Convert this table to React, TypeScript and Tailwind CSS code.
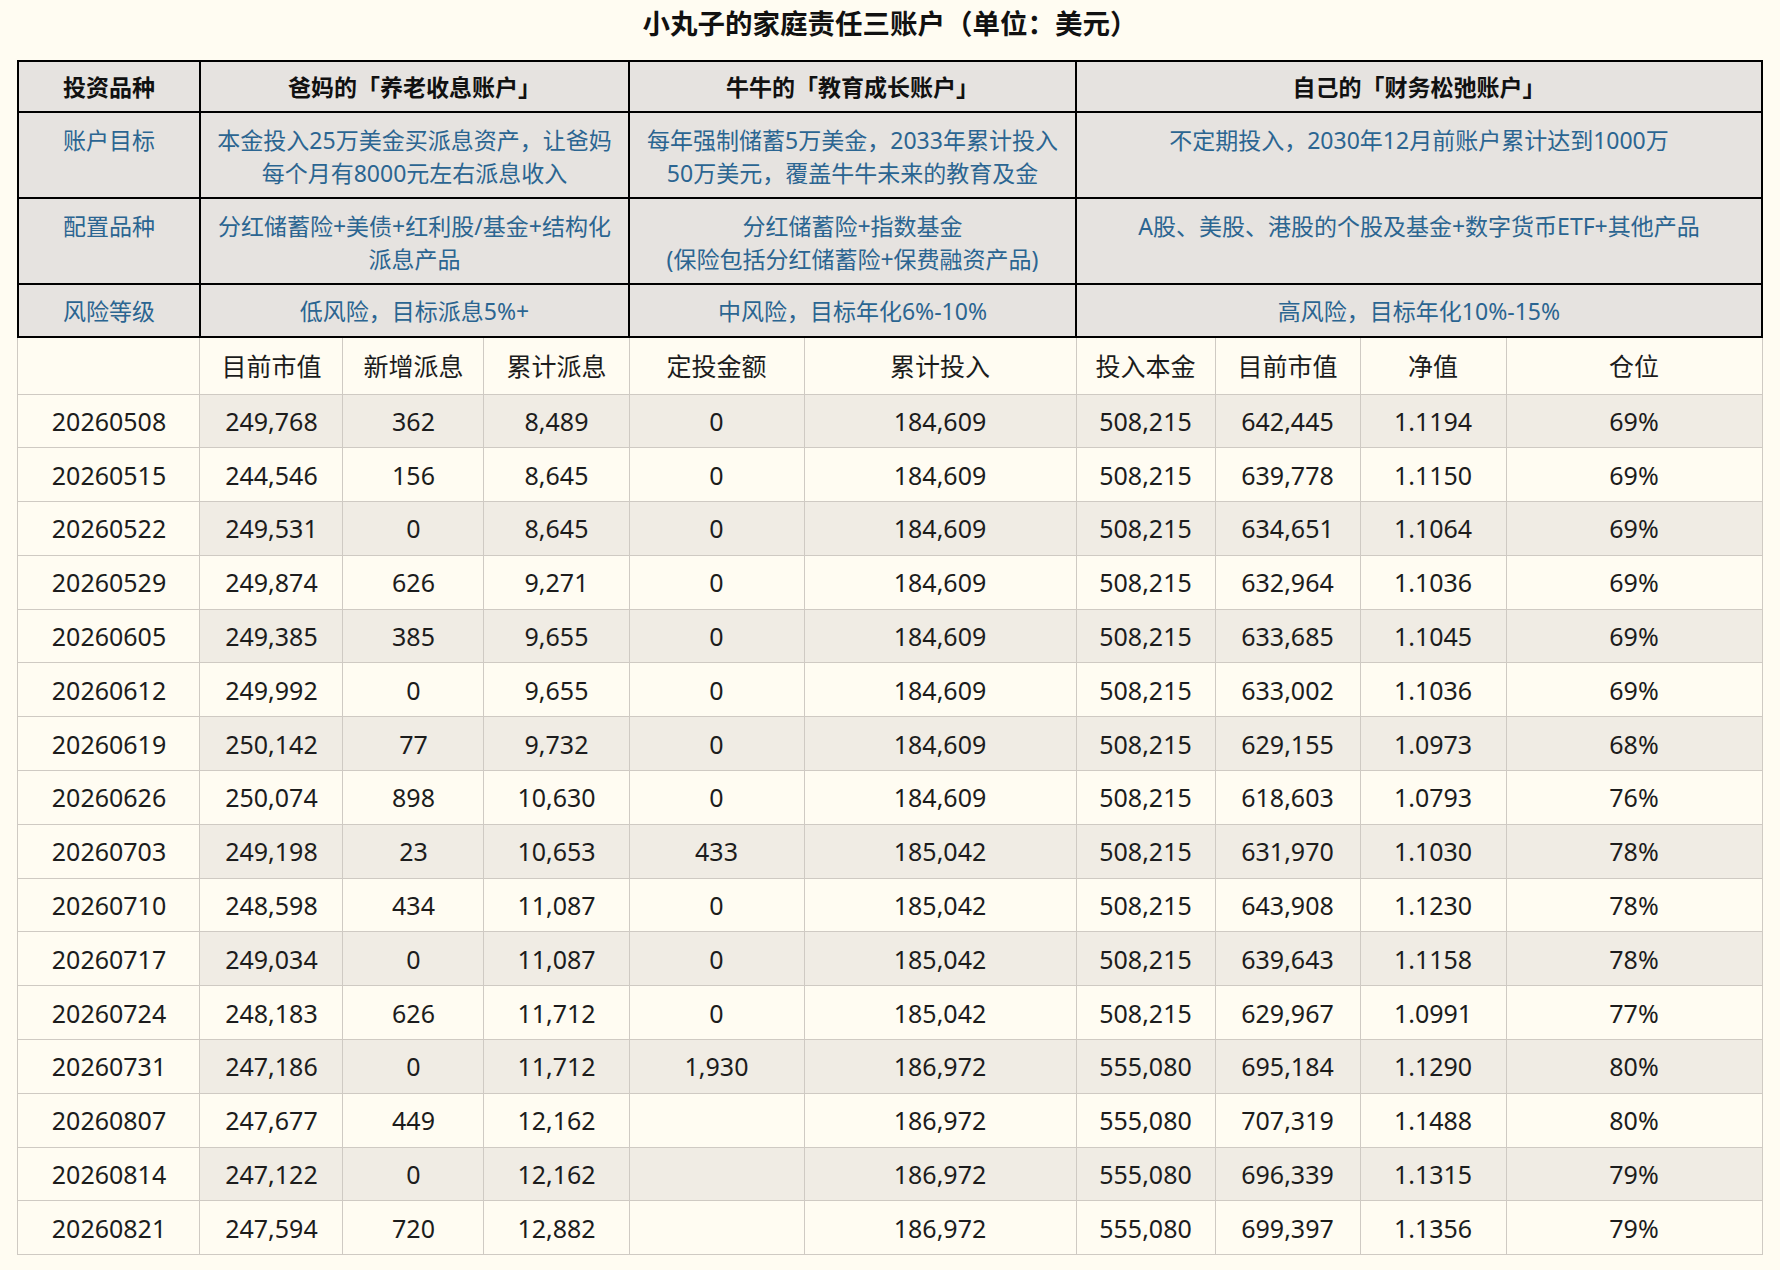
const rows: string[][] = [
  ["20260508", "249,768", "362", "8,489", "0", "184,609", "508,215", "642,445", "1.1194", "69%"],
  ["20260515", "244,546", "156", "8,645", "0", "184,609", "508,215", "639,778", "1.1150", "69%"],
  ["20260522", "249,531", "0", "8,645", "0", "184,609", "508,215", "634,651", "1.1064", "69%"],
  ["20260529", "249,874", "626", "9,271", "0", "184,609", "508,215", "632,964", "1.1036", "69%"],
  ["20260605", "249,385", "385", "9,655", "0", "184,609", "508,215", "633,685", "1.1045", "69%"],
  ["20260612", "249,992", "0", "9,655", "0", "184,609", "508,215", "633,002", "1.1036", "69%"],
  ["20260619", "250,142", "77", "9,732", "0", "184,609", "508,215", "629,155", "1.0973", "68%"],
  ["20260626", "250,074", "898", "10,630", "0", "184,609", "508,215", "618,603", "1.0793", "76%"],
  ["20260703", "249,198", "23", "10,653", "433", "185,042", "508,215", "631,970", "1.1030", "78%"],
  ["20260710", "248,598", "434", "11,087", "0", "185,042", "508,215", "643,908", "1.1230", "78%"],
  ["20260717", "249,034", "0", "11,087", "0", "185,042", "508,215", "639,643", "1.1158", "78%"],
  ["20260724", "248,183", "626", "11,712", "0", "185,042", "508,215", "629,967", "1.0991", "77%"],
  ["20260731", "247,186", "0", "11,712", "1,930", "186,972", "555,080", "695,184", "1.1290", "80%"],
  ["20260807", "247,677", "449", "12,162", "", "186,972", "555,080", "707,319", "1.1488", "80%"],
  ["20260814", "247,122", "0", "12,162", "", "186,972", "555,080", "696,339", "1.1315", "79%"],
  ["20260821", "247,594", "720", "12,882", "", "186,972", "555,080", "699,397", "1.1356", "79%"],
];

const columns = ["", "目前市值", "新增派息", "累计派息", "定投金额", "累计投入", "投入本金", "目前市值", "净值", "仓位"];

// header cells: thick black grid on grey
const head = "border-2 border-black bg-[#e6e3e0] px-2 text-center";
const label = head + " text-[#2b6591] align-top pt-[11px] leading-[33px]";
const cell = "border border-[#cfcac3] px-2 text-center text-[25px] leading-[32px]";

export default function App() {
  return (
    <div className="min-h-screen bg-[#fffcf2] pb-[15px] font-['Noto_Sans','Noto_Sans_CJK_SC',sans-serif] text-[#1c1c1c]">
      <h1 className="pt-[8px] pb-[20px] text-center text-[27.5px] font-bold leading-[32px] text-[#111]">
        小丸子的家庭责任三账户（单位：美元）
      </h1>

      <table className="mx-auto w-[1744px] table-fixed border-collapse">
        <colgroup>
          <col className="w-[182px]" />
          <col className="w-[143px]" />
          <col className="w-[141px]" />
          <col className="w-[145px]" />
          <col className="w-[175px]" />
          <col className="w-[272px]" />
          <col className="w-[139px]" />
          <col className="w-[145px]" />
          <col className="w-[146px]" />
          <col className="w-[256px]" />
        </colgroup>
        <tbody>
          <tr className="h-[51px] text-[23px] font-bold leading-[32px] text-[#111]">
            <td className={head}>投资品种</td>
            <td colSpan={3} className={head}>爸妈的「养老收息账户」</td>
            <td colSpan={2} className={head}>牛牛的「教育成长账户」</td>
            <td colSpan={4} className={head}>自己的「财务松弛账户」</td>
          </tr>
          <tr className="h-[86px] text-[23px]">
            <td className={label}>账户目标</td>
            <td colSpan={3} className={label}>
              本金投入25万美金买派息资产，让爸妈
              <br />
              每个月有8000元左右派息收入
            </td>
            <td colSpan={2} className={label}>
              每年强制储蓄5万美金，2033年累计投入
              <br />
              50万美元，覆盖牛牛未来的教育及金
            </td>
            <td colSpan={4} className={label}>不定期投入，2030年12月前账户累计达到1000万</td>
          </tr>
          <tr className="h-[86px] text-[23px]">
            <td className={label}>配置品种</td>
            <td colSpan={3} className={label}>
              分红储蓄险+美债+红利股/基金+结构化
              <br />
              派息产品
            </td>
            <td colSpan={2} className={label}>
              分红储蓄险+指数基金
              <br />
              (保险包括分红储蓄险+保费融资产品)
            </td>
            <td colSpan={4} className={label}>A股、美股、港股的个股及基金+数字货币ETF+其他产品</td>
          </tr>
          <tr className="h-[53px] text-[23px] leading-[32px]">
            <td className={head + " text-[#2b6591]"}>风险等级</td>
            <td colSpan={3} className={head + " text-[#2b6591]"}>低风险，目标派息5%+</td>
            <td colSpan={2} className={head + " text-[#2b6591]"}>中风险，目标年化6%-10%</td>
            <td colSpan={4} className={head + " text-[#2b6591]"}>高风险，目标年化10%-15%</td>
          </tr>

          <tr className="h-[57px]">
            {columns.map((c, i) => (
              <td key={i} className={cell}>
                {c}
              </td>
            ))}
          </tr>
          {rows.map((r, ri) => (
            <tr key={r[0]} className="h-[53.8px]">
              {r.map((v, ci) => (
                <td
                  key={ci}
                  className={cell + (ri % 2 === 0 && ci > 0 ? " bg-[#f0ece4]" : "")}
                >
                  {v}
                </td>
              ))}
            </tr>
          ))}
        </tbody>
      </table>
    </div>
  );
}
